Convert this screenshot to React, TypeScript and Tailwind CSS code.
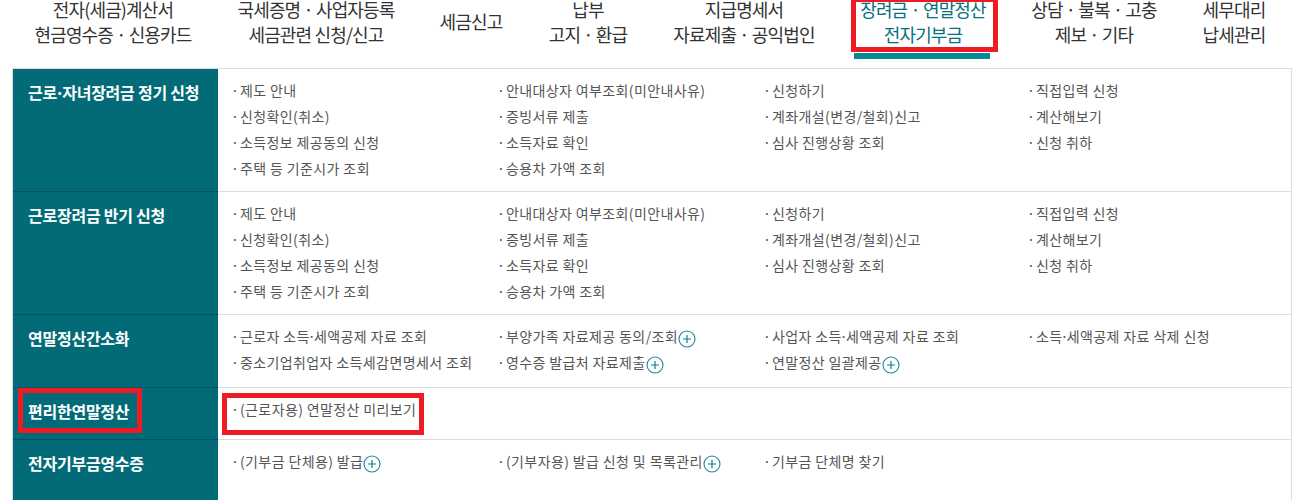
const font = 'font-["Noto_Sans_CJK_KR","Noto_Sans",sans-serif]';

const navItems = [
  { w: 'w-[226px]', lines: ['전자(세금)계산서', '현금영수증 · 신용카드'] },
  { w: 'w-[180px]', lines: ['국세증명 · 사업자등록', '세금관련 신청/신고'] },
  { w: 'w-[130px]', lines: ['세금신고'] },
  { w: 'w-[104px]', lines: ['납부', '고지 · 환급'] },
  { w: 'w-[208px]', lines: ['지급명세서', '자료제출 · 공익법인'] },
  { w: 'w-[150px]', lines: ['장려금 · 연말정산', '전자기부금'], active: true },
  { w: 'w-[192px]', lines: ['상담 · 불복 · 고충', '제보 · 기타'] },
  { w: 'w-[88px]', lines: ['세무대리', '납세관리'] },
];

type Item = { label: string; plus?: boolean } | null;

const grid1: Item[] = [
  { label: '제도 안내' }, { label: '안내대상자 여부조회(미안내사유)' }, { label: '신청하기' }, { label: '직접입력 신청' },
  { label: '신청확인(취소)' }, { label: '증빙서류 제출' }, { label: '계좌개설(변경/철회)신고' }, { label: '계산해보기' },
  { label: '소득정보 제공동의 신청' }, { label: '소득자료 확인' }, { label: '심사 진행상황 조회' }, { label: '신청 취하' },
  { label: '주택 등 기준시가 조회' }, { label: '승용차 가액 조회' }, null, null,
];

const rows: { title: string; h: string; items: Item[]; titleBox?: boolean; itemBox?: boolean }[] = [
  { title: '근로·자녀장려금 정기 신청', h: 'h-[123px]', items: grid1 },
  { title: '근로장려금 반기 신청', h: 'h-[123px]', items: grid1 },
  {
    title: '연말정산간소화',
    h: 'h-[73px]',
    items: [
      { label: '근로자 소득·세액공제 자료 조회' }, { label: '부양가족 자료제공 동의/조회', plus: true }, { label: '사업자 소득·세액공제 자료 조회' }, { label: '소득·세액공제 자료 삭제 신청' },
      { label: '중소기업취업자 소득세감면명세서 조회' }, { label: '영수증 발급처 자료제출', plus: true }, { label: '연말정산 일괄제공', plus: true }, null,
    ],
  },
  { title: '편리한연말정산', h: 'h-[52px]', items: [{ label: '(근로자용) 연말정산 미리보기' }], titleBox: true, itemBox: true },
  {
    title: '전자기부금영수증',
    h: 'h-[61px]',
    items: [{ label: '(기부금 단체용) 발급', plus: true }, { label: '(기부자용) 발급 신청 및 목록관리', plus: true }, { label: '기부금 단체명 찾기' }],
  },
];

// the middle dot sits tight between words in the original
function Dotted({ text }: { text: string }) {
  const parts = text.split('·');
  if (parts.length === 1) return <>{text}</>;
  return (
    <>
      {parts[0]}
      <span className="-mx-[2px]">·</span>
      {parts[1]}
    </>
  );
}

function PlusIcon() {
  return (
    <svg width="18" height="18" viewBox="0 0 18 18" className="mt-[6px] shrink-0" fill="none">
      <circle cx="9" cy="9" r="8" stroke="#1a8a9a" strokeWidth="1.1" />
      <path d="M9 5v8M5 9h8" stroke="#0a7f8c" strokeWidth="1.2" />
    </svg>
  );
}

export default function App() {
  return (
    <div className={`${font} h-[500px] w-[1292px] overflow-hidden bg-white`}>
      <nav className="flex h-[68px] items-start">
        {navItems.map((n) => (
          <div key={n.lines[0]} className={`${n.w} relative flex h-[68px] shrink-0 flex-col items-center gap-[6px] ${n.lines.length === 1 ? 'pt-[12px]' : ''}`}>
            {n.lines.map((l) => (
              <div
                key={l}
                className={`whitespace-nowrap text-[18px] leading-[19px] tracking-[-0.85px] ${n.active ? 'text-[#05727f]' : 'text-[#333333]'}`}
              >
                {l}
              </div>
            ))}
            {n.active && (
              <>
                <div className="absolute -top-[3px] left-[3px] h-[55px] w-[147px] border-[5px] border-[#ed1c24]" />
                <div className="absolute left-[6px] top-[53px] h-[6px] w-[136px] bg-[#068a94]" />
              </>
            )}
          </div>
        ))}
      </nav>

      <div className="ml-3 border-l border-t border-r border-[#dddddd]">
        {rows.map((r) => (
          <div key={r.title} className={`${r.h} flex`}>
            <div className="relative w-[205px] shrink-0 border-b border-[#05535f] bg-[#036b78] pl-[15px] pt-[12px] text-[16px] font-bold leading-[22px] tracking-[-0.25px] text-white">
              <Dotted text={r.title} />
              {r.titleBox && <div className="absolute left-[5px] top-0 h-[45px] w-[124px] border-[5px] border-[#ed1c24]" />}
            </div>
            <div className="relative grid flex-1 auto-rows-[26px] grid-cols-[266px_266px_264px_1fr] border-b border-[#dddddd] pl-[13px] pt-[9px] text-[14px] tracking-[0.38px] text-[#555555]">
              {r.items.map((it, i) =>
                it ? (
                  <div key={i} className="flex h-[26px] items-start whitespace-nowrap leading-[25px]">
                    <span className="w-[9px] shrink-0">·</span>
                    <span><Dotted text={it.label} /></span>
                    {it.plus && <PlusIcon />}
                  </div>
                ) : (
                  <div key={i} />
                ),
              )}
              {r.itemBox && <div className="absolute left-[4px] top-[5px] h-[42px] w-[202px] border-[5px] border-[#ed1c24]" />}
            </div>
          </div>
        ))}
      </div>
    </div>
  );
}
